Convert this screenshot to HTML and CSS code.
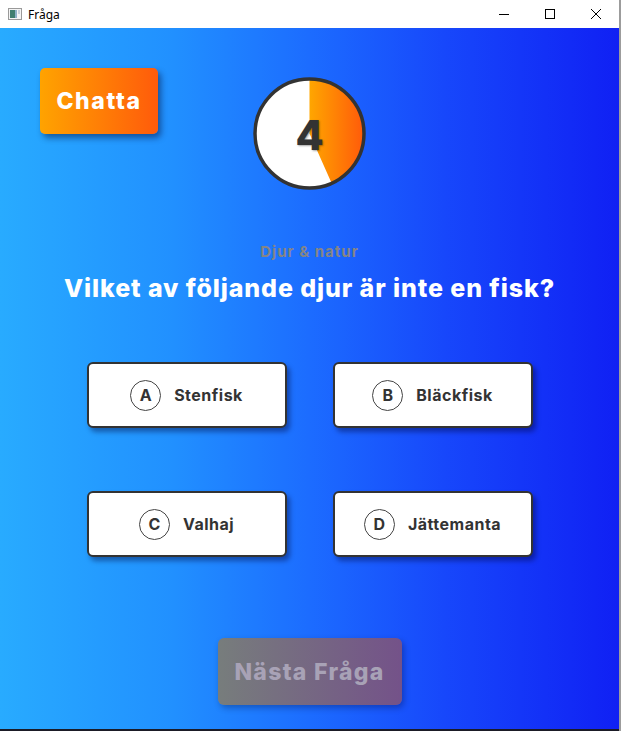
FILE: index.html
```html
<!DOCTYPE html>
<html lang="sv">
<head>
<meta charset="utf-8">
<title>Fråga</title>
<link rel="stylesheet" href="styles.css">
</head>
<body>
<div class="window">
  <header class="titlebar">
    <svg class="app-icon" width="14" height="12" viewBox="0 0 14 12">
      <rect x="0.5" y="0.5" width="13" height="11" fill="#f4f4f4" stroke="#9a9a9a"/>
      <rect x="2" y="2" width="5" height="8" fill="#3f7f70"/>
      <rect x="7" y="2" width="2" height="8" fill="#8fb2c8"/>
      <rect x="10" y="2" width="2" height="4" fill="#c9d3dc"/>
    </svg>
    <span class="title">Fråga</span>
    <div class="controls">
      <span class="ctrl"><svg width="10" height="10" viewBox="0 0 10 10"><path d="M0 5.5h10" stroke="#000" stroke-width="1"/></svg></span>
      <span class="ctrl"><svg width="10" height="10" viewBox="0 0 10 10"><rect x="0.5" y="0.5" width="9" height="9" fill="none" stroke="#000" stroke-width="1"/></svg></span>
      <span class="ctrl"><svg width="10" height="10" viewBox="0 0 10 10"><path d="M0 0L10 10M10 0L0 10" stroke="#000" stroke-width="1"/></svg></span>
    </div>
  </header>
  <main class="app">
    <div class="top">
      <button class="chat">Chatta</button>
      <div class="timer">
        <svg width="113" height="113" viewBox="0 0 113 113">
          <defs>
            <linearGradient id="og" x1="0" y1="0" x2="1" y2="0">
              <stop offset="0" stop-color="#ffa600"/>
              <stop offset="1" stop-color="#ff5a0a"/>
            </linearGradient>
          </defs>
          <circle cx="56.5" cy="56.5" r="54.5" fill="#fff"/>
          <path d="M56.5 56.5 L56.5 2 A54.5 54.5 0 0 1 78.67 106.29 Z" fill="url(#og)"/>
          <circle cx="56.5" cy="56.5" r="54.5" fill="none" stroke="#333" stroke-width="3.5"/>
        </svg>
        <span class="count">4</span>
      </div>
      <div></div>
    </div>
    <p class="category">Djur &amp; natur</p>
    <h1 class="question">Vilket av följande djur är inte en fisk?</h1>
    <div class="answers">
      <button class="answer"><span class="letter">A</span><span class="label">Stenfisk</span></button>
      <button class="answer"><span class="letter">B</span><span class="label">Bläckfisk</span></button>
      <button class="answer"><span class="letter">C</span><span class="label">Valhaj</span></button>
      <button class="answer"><span class="letter">D</span><span class="label">Jättemanta</span></button>
    </div>
    <button class="next">Nästa Fråga</button>
  </main>
</div>
</body>
</html>
```
FILE: styles.css
```css
html, body {
  margin: 0;
  padding: 0;
}
body {
  width: 621px;
  height: 731px;
  overflow: hidden;
  font-family: Inter, "Noto Sans", sans-serif;
}
.window {
  display: flex;
  flex-direction: column;
  height: 731px;
  box-sizing: border-box;
  border-right: 2px solid #9c9c9c;
}
.titlebar {
  height: 28px;
  background: #fff;
  display: flex;
  align-items: center;
  flex-shrink: 0;
}
.app-icon {
  margin-left: 8px;
  margin-right: 6px;
}
.title {
  font-family: "Noto Sans", "DejaVu Sans", sans-serif;
  font-size: 12px;
  color: #000;
}
.controls {
  margin-left: auto;
  display: flex;
}
.ctrl {
  width: 46px;
  height: 28px;
  display: flex;
  align-items: center;
  justify-content: center;
}
.app {
  flex: 1;
  background: linear-gradient(90deg, #28abff 0%, #2190ff 28%, #1c6cff 50%, #1747fb 72%, #1020f4 100%);
  border-bottom: 2px solid #1b1b26;
  display: flex;
  flex-direction: column;
  align-items: center;
  padding-top: 40px;
}
.top {
  align-self: stretch;
  display: grid;
  grid-template-columns: 1fr auto 1fr;
  align-items: start;
  padding: 0 40px;
}
button {
  font-family: inherit;
  border: none;
  padding: 0;
  cursor: pointer;
}
.chat {
  justify-self: start;
  width: 118px;
  height: 66px;
  border-radius: 5px;
  background: linear-gradient(90deg, #ffa300, #ff5b0b);
  box-shadow: 3px 4px 6px rgba(0, 0, 40, 0.45);
  color: #fff;
  font-size: 23px;
  font-weight: 800;
  letter-spacing: 1.6px;
}
.timer {
  margin-top: 9px;
  display: grid;
  place-items: center;
}
.timer svg,
.timer .count {
  grid-area: 1 / 1;
}
.timer svg {
  display: block;
}
.count {
  font-size: 41px;
  font-weight: 800;
  color: #333;
  text-shadow: 1px 1px 2px rgba(0, 0, 0, 0.35);
  line-height: 1;
  margin-top: 4px;
}
.category {
  margin: 52px 0 0;
  font-size: 15px;
  line-height: 20px;
  font-weight: 700;
  color: #858585;
  letter-spacing: 1px;
}
.question {
  margin: 10px 0 0;
  font-size: 25px;
  line-height: 32px;
  font-weight: 800;
  color: #fff;
  letter-spacing: 0.9px;
}
.answers {
  margin-top: 58px;
  display: grid;
  grid-template-columns: 200px 200px;
  gap: 63px 46px;
}
.answer {
  height: 66px;
  box-sizing: border-box;
  border: 2px solid #333;
  border-radius: 6px;
  background: #fff;
  box-shadow: 3px 4px 5px rgba(0, 0, 50, 0.4);
  display: flex;
  align-items: center;
  justify-content: center;
  gap: 13px;
  color: #333;
}
.letter {
  width: 31px;
  height: 31px;
  box-sizing: border-box;
  border: 1.3px solid #444;
  border-radius: 50%;
  display: flex;
  align-items: center;
  justify-content: center;
  font-size: 16px;
  font-weight: 700;
}
.label {
  font-size: 16px;
  font-weight: 700;
  letter-spacing: 0.5px;
}
.next {
  margin-top: 81px;
  width: 184px;
  height: 67px;
  border-radius: 6px;
  background: linear-gradient(90deg, #777d7c, #745289);
  box-shadow: 2px 3px 6px rgba(0, 0, 40, 0.3);
  color: #a8a2b6;
  font-size: 23px;
  font-weight: 800;
  letter-spacing: 1.3px;
}
```
